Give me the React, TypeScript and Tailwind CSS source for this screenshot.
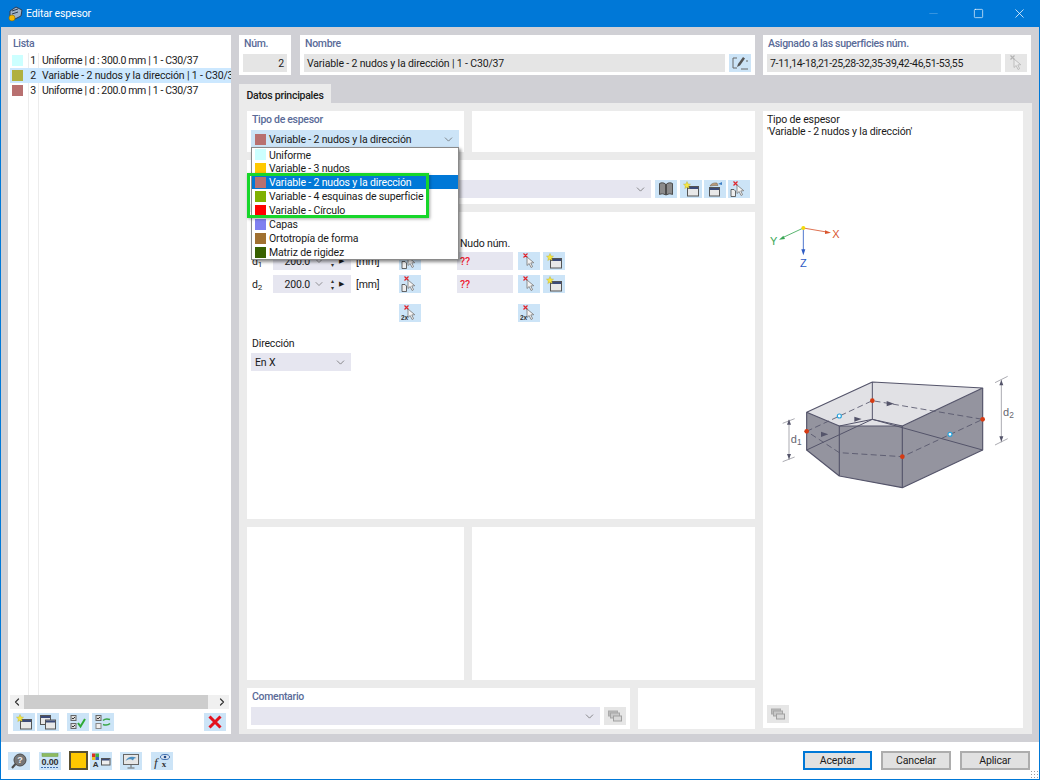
import type { ReactNode } from 'react';
import { ChevronDown, ChevronLeft, ChevronRight, Minus, Square, X } from 'lucide-react';

const NAVY = '#3b4a78';

// small toolbar pictures, all drawn on a 16x16 box
const Star = () => <polygon points="4,0.5 5,3 7.5,3.2 5.6,5 6.2,7.5 4,6.2 1.8,7.5 2.4,5 0.5,3.2 3,3" fill="#f5e642" stroke="#b8a820" strokeWidth="0.4" />;

const NewWindow = () => (
  <svg width="16" height="16" viewBox="0 0 16 16">
    <rect x="4.5" y="5.5" width="11" height="9.5" fill="#e8e8e8" stroke="#555" />
    <rect x="5" y="6" width="10" height="2" fill={NAVY} />
    <Star />
  </svg>
);

const CopyWindow = () => (
  <svg width="16" height="16" viewBox="0 0 16 16">
    <rect x="0.5" y="1.5" width="10" height="9" fill="#e8e8e8" stroke="#555" />
    <rect x="1" y="2" width="9" height="2" fill={NAVY} />
    <rect x="5.5" y="6" width="10" height="9" fill="#e8e8e8" stroke="#555" />
    <rect x="6" y="6.5" width="9" height="2" fill={NAVY} />
  </svg>
);

const CheckList = () => (
  <svg width="16" height="16" viewBox="0 0 16 16">
    <rect x="1" y="1.5" width="5" height="5" fill="#ddd" stroke="#666" />
    <rect x="1" y="9.5" width="5" height="5" fill="#ddd" stroke="#666" />
    <path d="M2 4l1 1 2-2M2 12l1 1 2-2" fill="none" stroke="#333" />
    <path d="M8 9l2.5 3.5L15 5" fill="none" stroke="#2faa35" strokeWidth="2" />
  </svg>
);

const SwapList = () => (
  <svg width="16" height="16" viewBox="0 0 16 16">
    <rect x="1" y="1.5" width="5" height="5" fill="#ddd" stroke="#666" />
    <rect x="1" y="9.5" width="5" height="5" fill="#eee" stroke="#888" />
    <path d="M2 4l1 1 2-2" fill="none" stroke="#333" />
    <path d="M8 6.5c2-2 4-2 7-1M15 9.5c-2 2-4 2-7 1" fill="none" stroke="#3aa648" strokeWidth="1.6" />
  </svg>
);

const RedX = () => (
  <svg width="16" height="16" viewBox="0 0 16 16">
    <path d="M2.5 2.5l11 11M13.5 2.5l-11 11" stroke="#e3101c" strokeWidth="3" />
  </svg>
);

const Pick = ({ doc, twice, dim }: { doc?: boolean; twice?: boolean; dim?: boolean }) => (
  <svg width="18" height="16" viewBox="0 0 18 16" opacity={dim ? 0.45 : 1}>
    <path d="M3.5 0.5l4 4M7.5 0.5l-4 4" stroke={dim ? '#777' : '#e0252c'} strokeWidth="1.2" />
    <path d="M7 4l0 8.500 2.200-2 1.800 4 1.600-.8-1.800-3.800 3-.2z" fill="#f4f4f4" stroke="#777" strokeWidth="0.8" />
    {doc && <path d="M1 8.500h3l1.500 1.500v5.500H1z" fill="#eee" stroke="#444" strokeWidth="0.8" />}
    {twice && <text x="0" y="15" fontSize="6.500" fontWeight="700" fill="#333" fontFamily="Liberation Sans, sans-serif">2x</text>}
  </svg>
);

const Book = () => (
  <svg width="16" height="16" viewBox="0 0 16 16">
    <path d="M1.500 2.500c2-1 4-1 6 .5v11c-2-1.500-4-1.500-6-.5z" fill="#8b8b8b" stroke="#4d4d4d" />
    <path d="M14.500 2.500c-2-1-4-1-6 .5v11c2-1.500 4-1.500 6-.5z" fill="#8b8b8b" stroke="#4d4d4d" />
  </svg>
);

const HandWindow = () => (
  <svg width="16" height="16" viewBox="0 0 16 16">
    <rect x="2.500" y="6.500" width="10" height="8.500" fill="#e8e8e8" stroke="#555" />
    <rect x="3" y="7" width="9" height="2" fill={NAVY} />
    <path d="M3 5c1-2.500 4-3.500 7-3l1 2.500H7z" fill="#b89878" stroke="#6f5a44" strokeWidth="0.5" />
    <path d="M11 3l4-2v3z" fill="#3f7fc4" />
  </svg>
);

const Pencil = () => (
  <svg width="18" height="16" viewBox="0 0 18 16">
    <path d="M6 3H2v10h4" fill="none" stroke="#666" />
    <path d="M6 12l1-3 5-7 2 1.500-5 7z" fill="#555" />
    <path d="M10 14h7M15 6h2" stroke="#666" />
  </svg>
);

const Help = () => (
  <svg width="18" height="16" viewBox="0 0 18 16">
    <circle cx="10" cy="7" r="6" fill="#777" stroke="#4c4c4c" />
    <path d="M5.500 11l-3.500 4" stroke="#4c4c4c" strokeWidth="2" />
    <text x="10" y="10" fontSize="9" fontWeight="700" textAnchor="middle" fill="#eee" fontFamily="Liberation Sans, sans-serif">?</text>
  </svg>
);

const Decimals = () => (
  <svg width="20" height="16" viewBox="0 0 20 16">
    <rect x="2" y="0.500" width="16" height="3" fill="#8dbb5e" stroke="#6c9a45" strokeWidth="0.5" />
    <text x="10" y="12" fontSize="9" fontWeight="700" textAnchor="middle" fill="#333" fontFamily="Liberation Sans, sans-serif">0.00</text>
    <path d="M1 14.500h18" stroke="#3f6fb0" strokeDasharray="2 1" />
  </svg>
);

const ColorWindow = () => (
  <svg width="20" height="16" viewBox="0 0 20 16">
    <rect x="1" y="0.500" width="3.500" height="3.500" fill="#d93025" />
    <rect x="4.500" y="0.500" width="3.500" height="3.500" fill="#3cae45" />
    <rect x="1" y="4" width="3.500" height="3" fill="#e8c020" />
    <rect x="4.500" y="4" width="3.500" height="3" fill="#3564c0" />
    <text x="4.500" y="14" fontSize="8" fontWeight="700" textAnchor="middle" fill="#333" fontFamily="Liberation Sans, sans-serif">A</text>
    <rect x="10.500" y="5.500" width="8.500" height="6.500" fill="#eee" stroke="#555" />
    <rect x="11" y="6" width="7.500" height="1.500" fill={NAVY} />
  </svg>
);

const Monitor = () => (
  <svg width="18" height="16" viewBox="0 0 18 16">
    <rect x="1.500" y="1.500" width="15" height="10" fill="#e6e6e6" stroke="#666" />
    <path d="M3.500 8c2-4.500 7-5.500 11-3-2 0-3 .8-3.500 2.500C9 5.500 6 6 3.500 8z" fill="#4d8fc0" />
    <path d="M9 11.500v3M5.500 15h7" stroke="#666" />
  </svg>
);

const Formula = () => (
  <svg width="18" height="16" viewBox="0 0 18 16">
    <text x="1" y="14" fontSize="13" fontStyle="italic" fill="#333" fontFamily="Liberation Serif, serif">f</text>
    <text x="11" y="14" fontSize="9" fontWeight="700" textAnchor="middle" fill="#333" fontFamily="Liberation Serif, serif">x</text>
    <ellipse cx="12" cy="4" rx="4.500" ry="2.500" fill="#dfe9f5" stroke="#3f6fb0" />
    <circle cx="12" cy="4" r="1.300" fill="#234a86" />
  </svg>
);

const Layers = () => (
  <svg width="18" height="16" viewBox="0 0 18 16">
    <rect x="2.500" y="3" width="9" height="5" fill="#bbb" stroke="#aaa" />
    <rect x="4.500" y="5" width="9" height="5" fill="#c8c8c8" stroke="#a5a5a5" />
    <rect x="7.500" y="8" width="8" height="5" fill="#d8d8d8" stroke="#a0a0a0" />
  </svg>
);

const IconBtn = ({ children, off, className = '' }: { children: ReactNode; off?: boolean; className?: string }) => (
  <div className={`flex h-[18px] w-[22px] shrink-0 items-center justify-center ${off ? 'bg-[#e6e6e6]' : 'bg-[#cce4f7]'} ${className}`}>
    {children}
  </div>
);

const Panel = ({ children, className = '' }: { children?: ReactNode; className?: string }) => (
  <div className={`bg-white ${className}`}>{children}</div>
);

const Label = ({ children, className = '' }: { children: ReactNode; className?: string }) => (
  <div className={`h-[19px] pt-[2px] pl-[5px] font-medium tracking-[-0.3px] text-[#5a6b98] ${className}`}>{children}</div>
);

const Field = ({ children, className = '' }: { children?: ReactNode; className?: string }) => (
  <div className={`flex h-[18px] items-center bg-[#e5e5e5] px-[3px] pt-px ${className}`}>{children}</div>
);

const Combo = ({ children, className = '' }: { children?: ReactNode; className?: string }) => (
  <div className={`flex h-[18px] items-center justify-between bg-[#e6e6f0] pr-1 pl-1 ${className}`}>
    <span className="pt-px">{children}</span>
    <ChevronDown size={13} strokeWidth={1.2} className="text-[#555]" />
  </div>
);

const Swatch = ({ color, className = '' }: { color: string; className?: string }) => (
  <span className={`inline-block h-[11px] w-[11px] shrink-0 ${className}`} style={{ backgroundColor: color }} />
);

const listRows = [
  { n: 1, color: '#ccffff', text: 'Uniforme | d : 300.0 mm | 1 - C30/37' },
  { n: 2, color: '#b0b040', text: 'Variable - 2 nudos y la dirección | 1 - C30/37', selected: true },
  { n: 3, color: '#b87070', text: 'Uniforme | d : 200.0 mm | 1 - C30/37' },
];

const thicknessTypes = [
  { color: '#ccffff', text: 'Uniforme' },
  { color: '#ffc800', text: 'Variable - 3 nudos' },
  { color: '#b87070', text: 'Variable - 2 nudos y la dirección', selected: true },
  { color: '#80b000', text: 'Variable - 4 esquinas de superficie' },
  { color: '#ff0000', text: 'Variable - Círculo' },
  { color: '#8080f0', text: 'Capas' },
  { color: '#a07030', text: 'Ortotropía de forma' },
  { color: '#386000', text: 'Matriz de rigidez' },
];

const ThicknessRow = ({ sub }: { sub: string }) => (
  <div className="flex h-[18px] items-center">
    <span className="w-[22px] pt-px pl-px">d<sub className="text-[8px]">{sub}</sub></span>
    <div className="flex h-[18px] w-[78px] items-center bg-[#e6e6f0]">
      <span className="w-[37px] pt-px text-right">200.0</span>
      <ChevronDown size={12} strokeWidth={1.2} className="ml-[3px] text-[#555]" />
      <span className="ml-[3px] flex w-[8px] flex-col items-center text-[6px] leading-[7px] text-[#333]">
        <span>▴</span>
        <span>▾</span>
      </span>
      <span className="ml-[3px] text-[7px]">▶</span>
    </div>
    <span className="ml-[5px] w-[43px] pt-px">[mm]</span>
    <IconBtn><Pick doc /></IconBtn>
    <div className="ml-[36px] flex h-[18px] w-[56px] items-center bg-[#e6e6f0] pt-px pl-[3px] font-medium text-[#ee2233]">??</div>
    <IconBtn className="ml-[5px]"><Pick /></IconBtn>
    <IconBtn className="ml-[3px]"><NewWindow /></IconBtn>
  </div>
);

const Figure = () => (
  <svg width="260" height="290" viewBox="9 0 780 870" className="shrink-0">
    {/* axes */}
    <path d="M130 54L200 66" stroke="#d9572f" strokeWidth="2.500" />
    <path d="M213 68l-18-7v11z" fill="#d9572f" />
    <path d="M130 54L70 82" stroke="#3aa755" strokeWidth="2.500" />
    <path d="M57 89l18-2-5-10z" fill="#3aa755" />
    <path d="M130 54V122" stroke="#2d5bc4" strokeWidth="2.500" />
    <path d="M130 136l-6-18h12z" fill="#2d5bc4" />
    <circle cx="130" cy="54" r="6" fill="#f4d90b" />
    <g fontFamily="Liberation Sans, sans-serif" fontSize="33">
      <text x="217" y="83" fill="#d9572f">X</text>
      <text x="30" y="105" fill="#3aa755">Y</text>
      <text x="120" y="170" fill="#2d5bc4">Z</text>
    </g>
    {/* body */}
    <path d="M140 607L337 516L668 534L427 648H238Z" fill="#e1e1e5" />
    <path d="M140 607L238 648V798L140 720Z" fill="#94949f" />
    <path d="M238 648H427V833L238 798Z" fill="#94949f" />
    <path d="M427 648L668 534V720L427 833Z" fill="#94949f" />
    <g fill="none" stroke="#54546a" strokeWidth="3.500" strokeLinejoin="round">
      <path d="M140 607L337 516L668 534L427 648H238Z" />
      <path d="M140 607V720L238 798L427 833L668 720V534" />
      <path d="M238 648V798M427 648V833" />
      <path d="M337 516V628M140 720L337 628L668 720M238 648L337 628L427 648" strokeWidth="3" />
    </g>
    <g fill="none" stroke="#54546a" strokeWidth="2.500" strokeDasharray="18 10">
      <path d="M140 664L337 572L668 628L427 740L238 728L140 664" />
    </g>
    <g fill="#54546a">
      <path d="M283 620l22 7-22 8zM380 573l22 8-22 8zM183 665l22 8-22 8z" />
    </g>
    <g fill="#d63a12">
      <circle cx="140" cy="664" r="7" />
      <circle cx="337" cy="572" r="7" />
      <circle cx="668" cy="628" r="7" />
      <circle cx="427" cy="740" r="7" />
    </g>
    <g fill="#fff" stroke="#2aa3dc" strokeWidth="3.500">
      <circle cx="238" cy="618" r="6" />
      <circle cx="570" cy="673" r="6" />
    </g>
    {/* dimensions */}
    <g stroke="#9a9aa2" strokeWidth="2.500" fill="none">
      <path d="M87 630V750M68 640L104 626M68 755L104 741" />
      <path d="M724 510V697M705 518L743 499M705 705L743 686" />
    </g>
    <path d="M87 628l-6 16h12zM87 748l-6-16h12zM724 510l-6 16h12zM724 695l-6-16h12z" fill="#54546a" />
    <g fontFamily="Liberation Sans, sans-serif" fill="#66666f">
      <text x="92" y="698" fontSize="33">d</text>
      <text x="111" y="704" fontSize="25">1</text>
      <text x="729" y="618" fontSize="33">d</text>
      <text x="748" y="624" fontSize="25">2</text>
    </g>
  </svg>
);

export default function App() {
  return (
    <div className="flex h-[780px] w-[1040px] flex-col overflow-hidden border-x border-b border-[#0078d7] bg-white font-['Roboto',sans-serif] text-[10.5px] leading-[14px] tracking-[-0.15px] text-[#1a1a1a]">
      {/* title bar */}
      <div className="-mx-px flex h-[27px] shrink-0 items-center bg-[#0078d7] pl-[8px] text-white">
        <svg width="15" height="16" viewBox="0 0 15 16">
          <path d="M2 5l6-4 6 3-1 6-6 3-5-3z" fill="#9fb2c8" stroke="#2d3c52" />
          <path d="M4 5l6-2M4 8l6-2" stroke="#2d3c52" />
          <circle cx="4" cy="12" r="3" fill="#f2b705" stroke="#8a6a00" strokeWidth="0.6" />
        </svg>
        <span className="ml-[3px] pt-px">Editar espesor</span>
        <div className="ml-auto flex items-center">
          <Minus size={13} strokeWidth={1} className="mr-[33px] text-white/40" />
          <Square size={11} strokeWidth={1.4} className="mr-[28px]" />
          <X size={15} strokeWidth={1.2} className="mr-[13px]" />
        </div>
      </div>

      {/* main area */}
      <div className="flex h-[715px] shrink-0 gap-2 bg-[#d0d0d5] px-[7px] py-2">
        {/* list */}
        <Panel className="flex w-[223px] shrink-0 flex-col">
          <Label className="!h-[18px]">Lista</Label>
          <div className="relative flex-1 overflow-hidden">
            <div className="absolute top-0 bottom-0 left-[20px] w-px bg-[#ececec]" />
            <div className="absolute top-0 bottom-0 left-[30px] w-px bg-[#ececec]" />
            {listRows.map((row) => (
              <div key={row.n} className={`relative ml-[2px] flex h-[15px] items-center whitespace-nowrap ${row.selected ? 'bg-[#cce8ff]' : ''}`}>
                <Swatch color={row.color} className="ml-[2px]" />
                <span className="w-[13px] shrink-0 text-right">{row.n}</span>
                <span className={`ml-[6px] ${row.selected ? '' : 'tracking-[-0.35px]'}`}>{row.text}</span>
              </div>
            ))}
          </div>
          <div className="mx-[2px] flex h-[14px] items-center bg-[#f0f0f0]">
            <ChevronLeft size={12} strokeWidth={2.4} className="w-[14px] text-[#333]" />
            <div className="h-[14px] w-[184px] bg-[#cdcdcd]" />
            <ChevronRight size={12} strokeWidth={2.4} className="ml-auto w-[14px] text-[#333]" />
          </div>
          <div className="flex h-[25px] items-center pr-[5px] pl-[5px]">
            <IconBtn><NewWindow /></IconBtn>
            <IconBtn className="ml-[2px]"><CopyWindow /></IconBtn>
            <IconBtn className="ml-[8px]"><CheckList /></IconBtn>
            <IconBtn className="ml-[3px]"><SwapList /></IconBtn>
            <IconBtn className="ml-auto"><RedX /></IconBtn>
          </div>
        </Panel>

        {/* right side */}
        <div className="flex min-w-0 flex-1 flex-col">
          <div className="flex h-[40px] shrink-0">
            <Panel className="w-[52px]">
              <Label>Núm.</Label>
              <Field className="mx-1 justify-end">2</Field>
            </Panel>
            <Panel className="ml-[9px] w-[455px]">
              <Label>Nombre</Label>
              <div className="flex px-1">
                <Field className="flex-1">Variable - 2 nudos y la dirección | 1 - C30/37</Field>
                <IconBtn className="ml-1"><Pencil /></IconBtn>
              </div>
            </Panel>
            <Panel className="ml-[8px] w-[268px]">
              <Label>Asignado a las superficies núm.</Label>
              <div className="flex px-1">
                <Field className="flex-1 tracking-[-0.3px]">7-11,14-18,21-25,28-32,35-39,42-46,51-53,55</Field>
                <IconBtn off className="ml-1"><Pick dim /></IconBtn>
              </div>
            </Panel>
          </div>

          <div className="mt-[9px] flex h-[19px] w-[92px] shrink-0 items-center justify-center bg-[#ebebeb] pt-[5px] font-medium tracking-[-0.25px]">Datos principales</div>

          <div className="flex min-h-0 flex-1 gap-2 bg-[#ebebeb] px-2 pt-2 pb-[6px]">
            <div className="flex w-[508px] shrink-0 flex-col gap-2">
              <div className="flex h-[41px] shrink-0 gap-2">
                <Panel className="w-[217px]">
                  <Label>Tipo de espesor</Label>
                  <div className="relative z-10 mx-1">
                    <div className="flex h-[18px] w-[208px] items-center bg-[#cce4f7] pr-1 pl-1">
                      <Swatch color="#b87070" />
                      <span className="ml-[3px] pt-px">Variable - 2 nudos y la dirección</span>
                      <ChevronDown size={13} strokeWidth={1.2} className="ml-auto text-[#555]" />
                    </div>
                    {/* open dropdown */}
                    <div className="absolute top-[17px] left-0 w-[208px] border border-[#8a8a8a] bg-white shadow-[2px_2px_3px_rgba(0,0,0,0.45)]">
                      {thicknessTypes.map((t) => (
                        <div key={t.text} className={`flex h-[14px] items-center pl-[3px] first:h-[13px] ${t.selected ? 'bg-[#0078d7] text-white' : ''}`}>
                          <Swatch color={t.color} />
                          <span className="ml-[3px] pt-[2px]">{t.text}</span>
                        </div>
                      ))}
                      <div className="absolute top-[25px] left-[-5px] h-[45px] w-[182px] border-[3px] border-[#17d62a] shadow-[1px_1px_3px_rgba(0,0,0,0.35)]" />
                    </div>
                  </div>
                </Panel>
                <Panel className="flex-1" />
              </div>

              <Panel className="h-[44px] shrink-0 px-1 pt-[20px]">
                <div className="flex">
                  <Combo className="w-[400px]" />
                  <IconBtn className="ml-[4px]"><Book /></IconBtn>
                  <IconBtn className="ml-[3px]"><NewWindow /></IconBtn>
                  <IconBtn className="ml-[2px]"><HandWindow /></IconBtn>
                  <IconBtn className="ml-[2px]"><Pick doc /></IconBtn>
                </div>
              </Panel>

              <Panel className="h-[307px] shrink-0 px-1 pt-[24px]">
                <div className="h-[16px] pt-px pl-[209px]">Nudo núm.</div>
                <div className="flex flex-col gap-[5px]">
                  <ThicknessRow sub="1" />
                  <ThicknessRow sub="2" />
                </div>
                <div className="mt-[11px] flex">
                  <IconBtn className="ml-[148px]"><Pick twice /></IconBtn>
                  <IconBtn className="ml-[97px]"><Pick twice /></IconBtn>
                </div>
                <div className="mt-[14px] h-[17px] pt-px pl-px">Dirección</div>
                <Combo className="w-[100px]">En X</Combo>
              </Panel>

              <div className="flex h-[153px] shrink-0 gap-2">
                <Panel className="w-[217px]" />
                <Panel className="flex-1" />
              </div>

              <div className="flex h-[41px] shrink-0 gap-2">
                <Panel className="w-[383px]">
                  <Label>Comentario</Label>
                  <div className="flex px-1">
                    <Combo className="w-[349px]" />
                    <IconBtn off className="ml-1"><Layers /></IconBtn>
                  </div>
                </Panel>
                <Panel className="flex-1" />
              </div>
            </div>

            {/* preview */}
            <Panel className="flex w-[260px] shrink-0 flex-col pt-[3px]">
              <div className="pl-1 leading-[11.5px]">
                <div>Tipo de espesor</div>
                <div>'Variable - 2 nudos y la dirección'</div>
              </div>
              <div className="mt-[73px]"><Figure /></div>
              <IconBtn off className="mt-auto mb-[5px] ml-1"><Layers /></IconBtn>
            </Panel>
          </div>
        </div>
      </div>

      {/* footer */}
      <div className="relative flex flex-1 items-center pr-[9px] pl-[7px]">
        <IconBtn><Help /></IconBtn>
        <IconBtn className="ml-[9px]"><Decimals /></IconBtn>
        <div className="ml-[8px] h-[19px] w-[19px] border-2 border-[#5a5030] bg-[#ffc800]" />
        <IconBtn className="ml-[2px]"><ColorWindow /></IconBtn>
        <IconBtn className="ml-[8px]"><Monitor /></IconBtn>
        <IconBtn className="ml-[9px]"><Formula /></IconBtn>
        <div className="ml-auto flex gap-[9px]">
          <button className="h-[19px] w-[69px] border-2 border-[#0078d7] bg-[#e1e1e1] pt-px">Aceptar</button>
          <button className="h-[19px] w-[70px] border-2 border-[#adadad] bg-[#e1e1e1] pt-px">Cancelar</button>
          <button className="h-[19px] w-[70px] border-2 border-[#adadad] bg-[#e1e1e1] pt-px">Aplicar</button>
        </div>
        <div className="absolute right-0 bottom-0 h-[9px] w-[9px] bg-[radial-gradient(#9a9a9a_1px,transparent_1px)] bg-[length:3px_3px]" />
      </div>
    </div>
  );
}
